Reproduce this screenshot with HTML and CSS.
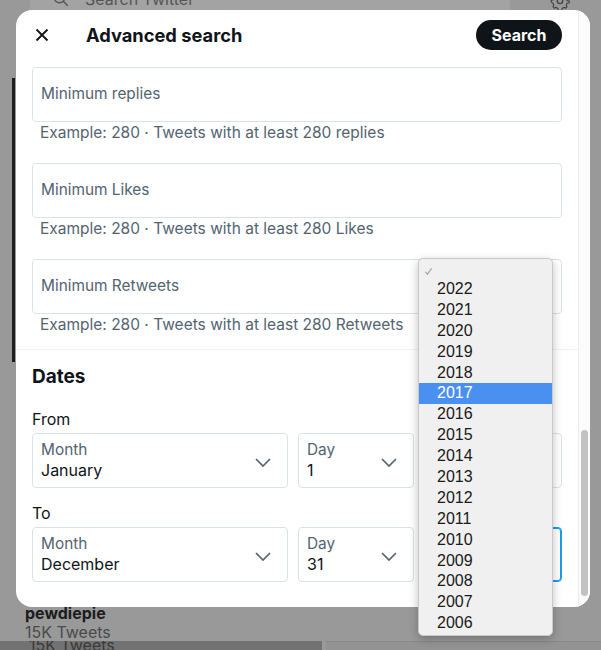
FILE: index.html
```html
<!DOCTYPE html>
<html lang="en">
<head>
<meta charset="utf-8">
<title>Advanced search</title>
<link rel="stylesheet" href="styles.css">
</head>
<body>
<div class="page">
  <div class="topbar">
    <div class="searchbox">
      <svg class="search-ico" viewBox="0 0 24 24" width="18" height="18"><circle cx="10" cy="10" r="7" fill="none" stroke="#555" stroke-width="1.8"/><path d="M15 15l6 6" stroke="#555" stroke-width="1.8" fill="none"/></svg>
      <span>Search Twitter</span>
    </div>
    <svg class="gear" viewBox="0 0 24 24" width="20" height="20"><circle cx="12" cy="12" r="3.2" fill="none" stroke="#444" stroke-width="1.6"/><path d="M12 2.5l2 .4.6 2.4 2 1.1 2.3-.8 1.4 1.6-.8 2.3 1 2 2.5.6v2l-2.5.6-1 2 .8 2.3-1.4 1.6-2.3-.8-2 1.1-.6 2.4-2 .4-2-.4-.6-2.4-2-1.1-2.3.8-1.4-1.6.8-2.3-1-2L1.5 13v-2l2.5-.6 1-2-.8-2.3 1.4-1.6 2.3.8 2-1.1.6-2.4z" fill="none" stroke="#444" stroke-width="1.4"/></svg>
  </div>
  <div class="middle"><div class="leftbar"></div></div>
  <div class="profile">
    <div class="pname">pewdiepie</div>
    <div class="pcount">15K Tweets</div>
  </div>
  <div class="bottomstrip">
    <div class="strip-left"><span>15K Tweets</span></div>
    <div class="strip-right"></div>
  </div>
</div>

<div class="modal">
  <div class="content">
    <div class="header">
      <svg class="close" viewBox="0 0 14 14" width="14" height="14"><path d="M1.5 1.5l11 11M12.5 1.5l-11 11" stroke="#0f1419" stroke-width="1.8" fill="none"/></svg>
      <h1 class="title">Advanced search</h1>
      <button class="search-btn">Search</button>
    </div>
    <div class="body">
      <div class="box"><span class="placeholder">Minimum replies</span></div>
      <div class="hint">Example: 280 · Tweets with at least 280 replies</div>
      <div class="box"><span class="placeholder">Minimum Likes</span></div>
      <div class="hint">Example: 280 · Tweets with at least 280 Likes</div>
      <div class="box"><span class="placeholder">Minimum Retweets</span></div>
      <div class="hint last">Example: 280 · Tweets with at least 280 Retweets</div>
      <div class="divider"></div>
      <h2 class="section">Dates</h2>
      <div class="range-label">From</div>
      <div class="date-row">
        <div class="select"><div class="sel-text"><div class="sel-label">Month</div><div class="sel-value">January</div></div><svg class="chev" viewBox="0 0 16 9" width="16" height="9"><path d="M1 1l7 7 7-7" stroke="#536471" stroke-width="1.7" fill="none"/></svg></div>
        <div class="select"><div class="sel-text"><div class="sel-label">Day</div><div class="sel-value">1</div></div><svg class="chev" viewBox="0 0 16 9" width="16" height="9"><path d="M1 1l7 7 7-7" stroke="#536471" stroke-width="1.7" fill="none"/></svg></div>
        <div class="select"><div class="sel-text"></div><svg class="chev" viewBox="0 0 16 9" width="16" height="9"><path d="M1 1l7 7 7-7" stroke="#536471" stroke-width="1.7" fill="none"/></svg></div>
      </div>
      <div class="range-label to">To</div>
      <div class="date-row">
        <div class="select"><div class="sel-text"><div class="sel-label">Month</div><div class="sel-value">December</div></div><svg class="chev" viewBox="0 0 16 9" width="16" height="9"><path d="M1 1l7 7 7-7" stroke="#536471" stroke-width="1.7" fill="none"/></svg></div>
        <div class="select"><div class="sel-text"><div class="sel-label">Day</div><div class="sel-value">31</div></div><svg class="chev" viewBox="0 0 16 9" width="16" height="9"><path d="M1 1l7 7 7-7" stroke="#536471" stroke-width="1.7" fill="none"/></svg></div>
        <div class="select focused"><div class="sel-text"></div><svg class="chev" viewBox="0 0 16 9" width="16" height="9"><path d="M1 1l7 7 7-7" stroke="#536471" stroke-width="1.7" fill="none"/></svg></div>
      </div>
    </div>
  </div>
  <div class="track"><div class="thumb"></div></div>
</div>

<div class="popup">
  <div class="opt blank"><svg viewBox="0 0 10 10" width="9" height="9"><path d="M1.5 5.5l2.2 2.5L8.5 1.5" stroke="#a8a8a8" stroke-width="1.3" fill="none"/></svg></div>
  <div class="opt">2022</div>
  <div class="opt">2021</div>
  <div class="opt">2020</div>
  <div class="opt">2019</div>
  <div class="opt">2018</div>
  <div class="opt active">2017</div>
  <div class="opt">2016</div>
  <div class="opt">2015</div>
  <div class="opt">2014</div>
  <div class="opt">2013</div>
  <div class="opt">2012</div>
  <div class="opt">2011</div>
  <div class="opt">2010</div>
  <div class="opt">2009</div>
  <div class="opt">2008</div>
  <div class="opt">2007</div>
  <div class="opt">2006</div>
</div>
</body>
</html>
```

FILE: styles.css
```css
* { box-sizing: border-box; }
html, body { margin: 0; padding: 0; }
body {
  width: 601px;
  height: 650px;
  overflow: hidden;
  background: #999999;
  font-family: Inter, "Liberation Sans", Arial, sans-serif;
  position: relative;
}

/* background page (dimmed) */
.page {
  height: 650px;
  display: flex;
  flex-direction: column;
}
.topbar {
  height: 10px;
  display: flex;
  align-items: flex-end;
  justify-content: space-between;
  padding: 0 31px 0 30px;
}
.searchbox {
  width: 480px;
  height: 34px;
  margin-bottom: -3px;
  background: #a3a3a3;
  border-radius: 0 0 4px 4px;
  display: flex;
  align-items: flex-end;
  padding: 0 0 0 22px;
  gap: 15px;
  color: #555;
  font-size: 16px;
  line-height: 20px;
}
.searchbox span { margin-bottom: 4px; }
.search-ico { margin-bottom: 5px; }
.gear { margin-bottom: -1px; }
.middle {
  flex: 1;
  padding: 68px 0 0 12px;
}
.leftbar {
  width: 3px;
  height: 284px;
  background: #1e1e1e;
}
.profile {
  padding: 0 0 0 25px;
  height: 38px;
  margin-top: -1px;
}
.pname {
  font-weight: 700;
  font-size: 16px;
  line-height: 20px;
  color: #1c1c1c;
}
.pcount {
  font-size: 16px;
  line-height: 18px;
  color: #4a4a4a;
}
.bottomstrip {
  height: 9px;
  display: flex;
}
.strip-left {
  width: 322px;
  background: #727272;
  overflow: hidden;
  padding-left: 29px;
}
.strip-left span {
  display: block;
  font-size: 16px;
  line-height: 18px;
  color: #3a3a3a;
  margin-top: -5px;
}
.strip-right {
  flex: 1;
  background: #939393;
  border-top: 1px solid #8a8a8a;
  margin-left: 4px;
}

/* modal */
.modal {
  position: absolute;
  left: 16px;
  top: 10px;
  width: 574px;
  height: 597px;
  background: #fff;
  border-radius: 16px;
  overflow: hidden;
  display: flex;
}
.content {
  flex: 1;
  min-width: 0;
}
.track {
  width: 12px;
  border-left: 1px solid #ececec;
  background: #fbfbfb;
  padding: 420px 0 0 2px;
}
.thumb {
  width: 7px;
  height: 166px;
  border-radius: 4px;
  background: #c2c2c2;
}
.header {
  height: 50px;
  display: flex;
  align-items: center;
  padding: 0 16px 0 19px;
}
.close { flex: none; }
.title {
  margin: 0 0 0 37px;
  font-size: 18.3px;
  font-weight: 700;
  color: #0f1419;
  flex: 1;
}
.search-btn {
  height: 30px;
  width: 86px;
  border: none;
  border-radius: 15px;
  background: #0f1419;
  color: #fff;
  font-family: inherit;
  font-weight: 700;
  font-size: 16px;
  padding: 0;
}
.body {
  padding: 7px 16px 0;
}
.box {
  height: 55px;
  border: 1px solid #dbe2e6;
  border-radius: 4px;
  display: flex;
  align-items: center;
  padding: 0 0 3px 8px;
}
.placeholder {
  font-size: 15.4px;
  color: #536471;
}
.hint {
  font-size: 15.5px;
  line-height: 20px;
  color: #536471;
  padding-left: 8px;
  margin-top: 1px;
  margin-bottom: 20px;
}
.hint.last { margin-bottom: 14px; }
.divider {
  height: 1px;
  background: #eff3f4;
  margin: 0 -16px;
}
.section {
  margin: 14px 0 0;
  font-size: 19px;
  line-height: 26px;
  font-weight: 700;
  color: #0f1419;
}
.range-label {
  margin-top: 19px;
  font-size: 16px;
  line-height: 20px;
  color: #0f1419;
  margin-bottom: 4px;
}
.range-label.to { margin-top: 15px; }
.date-row {
  display: grid;
  grid-template-columns: 256px 116px 1fr;
  gap: 10px;
}
.select {
  height: 55px;
  border: 1px solid #dbe2e6;
  border-radius: 4px;
  display: flex;
  align-items: center;
  padding: 0 16px 0 8px;
}
.select.focused {
  border-color: #1d9bf0;
  box-shadow: inset 0 0 0 1px #1d9bf0;
}
.sel-text {
  flex: 1;
  margin-top: -1px;
}
.sel-label {
  font-size: 15.4px;
  line-height: 20px;
  color: #536471;
}
.sel-value {
  font-size: 16px;
  line-height: 21px;
  color: #0f1419;
}
.chev { flex: none; margin-top: 3px; }

/* native select popup */
.popup {
  position: absolute;
  left: 418px;
  top: 258px;
  width: 135px;
  height: 378px;
  background: #f0f0f0;
  border: 1px solid #c9c9c9;
  border-radius: 5px;
  box-shadow: 0 3px 10px rgba(0,0,0,0.25);
  padding-top: 4px;
  font-family: "Liberation Sans", Arial, sans-serif;
}
.opt {
  height: 20.9px;
  line-height: 20.9px;
  padding-left: 18px;
  font-size: 16px;
  color: #1a1a1a;
}
.opt.blank {
  height: 16px;
  padding-left: 5px;
  display: flex;
  align-items: center;
}
.opt.active {
  background: #4a90f0;
  color: #fff;
}
```
